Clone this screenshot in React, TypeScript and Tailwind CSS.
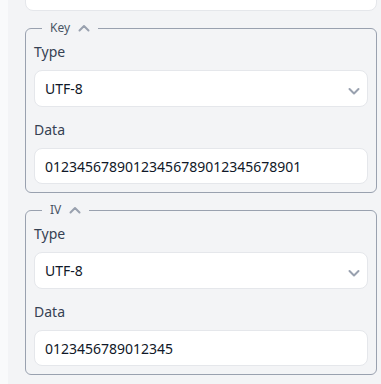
import React from "react";

const ChevronUp = () => (
  <svg width="12" height="12" viewBox="0 0 12 12" fill="none" className="text-gray-400">
    <path d="M1.5 8.5L6 4l4.5 4.5" stroke="currentColor" strokeWidth="2" strokeLinecap="round" strokeLinejoin="round" />
  </svg>
);

const ChevronDown = () => (
  <svg width="12" height="12" viewBox="0 0 12 12" fill="none" className="text-gray-400">
    <path d="M1.5 4L6 8.5 10.5 4" stroke="currentColor" strokeWidth="2" strokeLinecap="round" strokeLinejoin="round" />
  </svg>
);

const Section = ({ title, data }: { title: string; data: string }) => {
  return (
    <fieldset className="rounded-md border border-gray-400 px-2 pb-2 pt-[6px]">
      <legend className="ml-2 px-2">
        <span className="flex items-center gap-2 text-xs leading-4 text-gray-600">
          {title}
          <ChevronUp />
        </span>
      </legend>
      <div className="flex flex-col">
        <label className="mb-2 text-sm leading-5 text-gray-700">Type</label>
        <div className="flex h-[37px] items-center justify-between rounded-lg border border-gray-200 bg-white pl-2.5 pr-[7px] text-sm text-gray-900">
          <span>UTF-8</span>
          <span className="mt-1">
            <ChevronDown />
          </span>
        </div>
        <label className="mb-2 mt-[13px] text-sm leading-5 text-gray-700">Data</label>
        <input
          readOnly
          value={data}
          className="h-9 w-full rounded-lg border border-gray-200 bg-white px-2.5 text-sm text-gray-900 outline-none"
        />
      </div>
    </fieldset>
  );
};

export default function App() {
  return (
    <div
      className="flex h-[384px] w-[381px] overflow-hidden bg-gray-50"
      style={{ fontFamily: '"Noto Sans", sans-serif' }}
    >
      <div className="w-2 shrink-0" />
      <div className="flex flex-1 flex-col gap-[9px] bg-gray-100 pl-[17px] pr-1">
        <input
          readOnly
          value=""
          className="-mt-[25px] h-9 w-full shrink-0 rounded-lg border border-gray-200 bg-white"
        />
        <Section title="Key" data="01234567890123456789012345678901" />
        <Section title="IV" data="0123456789012345" />
      </div>
    </div>
  );
}
